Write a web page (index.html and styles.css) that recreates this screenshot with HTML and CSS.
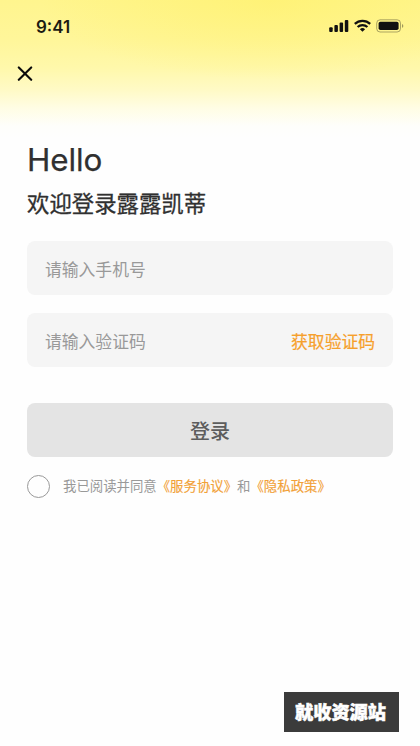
FILE: index.html
```html
<!DOCTYPE html>
<html lang="zh-CN">
<head>
<meta charset="utf-8">
<title>登录</title>
<link rel="stylesheet" href="styles.css">
</head>
<body>
<div class="screen">
  <header class="status">
    <span class="time">9:41</span>
    <svg class="status-icons" width="76" height="16" viewBox="0 0 76 16">
      <g fill="#111">
        <rect x="0.2" y="8.2" width="3.5" height="4.8" rx="1"/>
        <rect x="5.4" y="6" width="3.5" height="7" rx="1"/>
        <rect x="10.6" y="3.5" width="3.5" height="9.5" rx="1"/>
        <rect x="15.8" y="1" width="3.5" height="12" rx="1"/>
        <path d="M33.5 12.8l-2.6-2.6a3.9 3.9 0 0 1 5.2 0z"/>
        <rect x="49.6" y="2.7" width="20" height="8.4" rx="1.8"/>
      </g>
      <g fill="none" stroke="#111" stroke-width="2.2">
        <path d="M25.8 4.9a11.2 11.2 0 0 1 15.4 0"/>
        <path d="M28.6 8a7.1 7.1 0 0 1 9.8 0"/>
      </g>
      <rect x="47.7" y=".8" width="23.8" height="12.2" rx="3.4" fill="none" stroke="#111" stroke-opacity=".35"/>
      <path d="M73 5v3.8q1.3-.6 1.3-1.9T73 5z" fill="#111" fill-opacity=".4"/>
    </svg>
  </header>
  <button class="close" aria-label="关闭">
    <svg width="16" height="16" viewBox="0 0 16 16"><path d="M1.8 1.4l12.4 12.4M14.2 1.4L1.8 13.8" stroke="#0c0c0c" stroke-width="2.1" stroke-linecap="round"/></svg>
  </button>
  <main class="content">
    <h1 class="hello">Hello</h1>
    <h2 class="welcome">欢迎登录露露凯蒂</h2>
    <div class="field"><span>请输入手机号</span></div>
    <div class="field"><span>请输入验证码</span><a class="code">获取验证码</a></div>
    <button class="login">登录</button>
    <div class="agree"><span class="radio"></span><p class="terms">我已阅读并同意<a>《服务协议》</a>和<a>《隐私政策》</a></p></div>
  </main>
  <div class="mark">就收资源站</div>
</div>
</body>
</html>
```

FILE: styles.css
```css
* { box-sizing: border-box; }
body {
  margin: 0;
  font-family: Inter, "Noto Sans CJK SC", sans-serif;
  background: #fefefe;
}
button { border: 0; padding: 0; background: none; font-family: inherit; }
h1, h2, p { margin: 0; }
.screen {
  position: relative;
  width: 420px;
  height: 746px;
  overflow: hidden;
  background:
    radial-gradient(ellipse 230px 80px at 270px 0, rgba(255, 240, 100, .55), rgba(255, 240, 100, 0)),
    linear-gradient(#fff58e 0, #fff69a 40px, #fff8ab 68px, #fffac6 90px, #fffde4 108px, #fefefb 126px, #fefefe 138px);
}
.status {
  display: flex;
  justify-content: space-between;
  align-items: center;
  height: 36px;
  padding: 18px 15px 0 36px;
}
.time { font-size: 17px; font-weight: 600; line-height: 18px; color: #1c1b12; }
.status-icons { display: block; }
.close { display: block; width: 16px; height: 16px; margin: 30px 0 0 17px; }
.close svg { display: block; }
.content { padding: 58px 27px 0; }
.hello {
  font-size: 31.4px;
  line-height: 40px;
  font-weight: 400;
  letter-spacing: -.1px;
  color: #303030;
  -webkit-text-stroke: .25px #303030;
}
.welcome {
  margin-top: 8px;
  font-size: 22.4px;
  line-height: 32px;
  font-weight: 400;
  color: #303030;
  -webkit-text-stroke: .3px #303030;
}
.field {
  display: flex;
  justify-content: space-between;
  align-items: center;
  height: 54px;
  margin-top: 21px;
  padding: 1px 18px 0;
  border-radius: 8px;
  background: #f5f5f5;
  color: #999;
  font-size: 16.8px;
}
.field + .field { margin-top: 18px; }
.code { color: #f6a02b; -webkit-text-stroke: .2px #f6a02b; }
.login {
  display: block;
  width: 100%;
  height: 54px;
  margin-top: 36px;
  border-radius: 8px;
  background: #e4e4e4;
  color: #5d5d5d;
  font-size: 20px;
  font-weight: 500;
}
.agree { display: flex; align-items: center; gap: 13px; margin-top: 17px; }
.radio { width: 23px; height: 23px; border: 1.5px solid #999; border-radius: 50%; }
.terms { font-size: 13.4px; line-height: 24px; color: #999; white-space: nowrap; }
.terms a { color: #f2a137; -webkit-text-stroke: .15px #f2a137; }
.mark {
  position: absolute;
  left: 284px;
  top: 692px;
  width: 115px;
  height: 40px;
  background: #3b3b3b;
  color: #fff;
  font-size: 18.2px;
  font-weight: 900;
  line-height: 40px;
  text-align: center;
  text-indent: -2px;
  -webkit-text-stroke: .5px #fff;
}
```
